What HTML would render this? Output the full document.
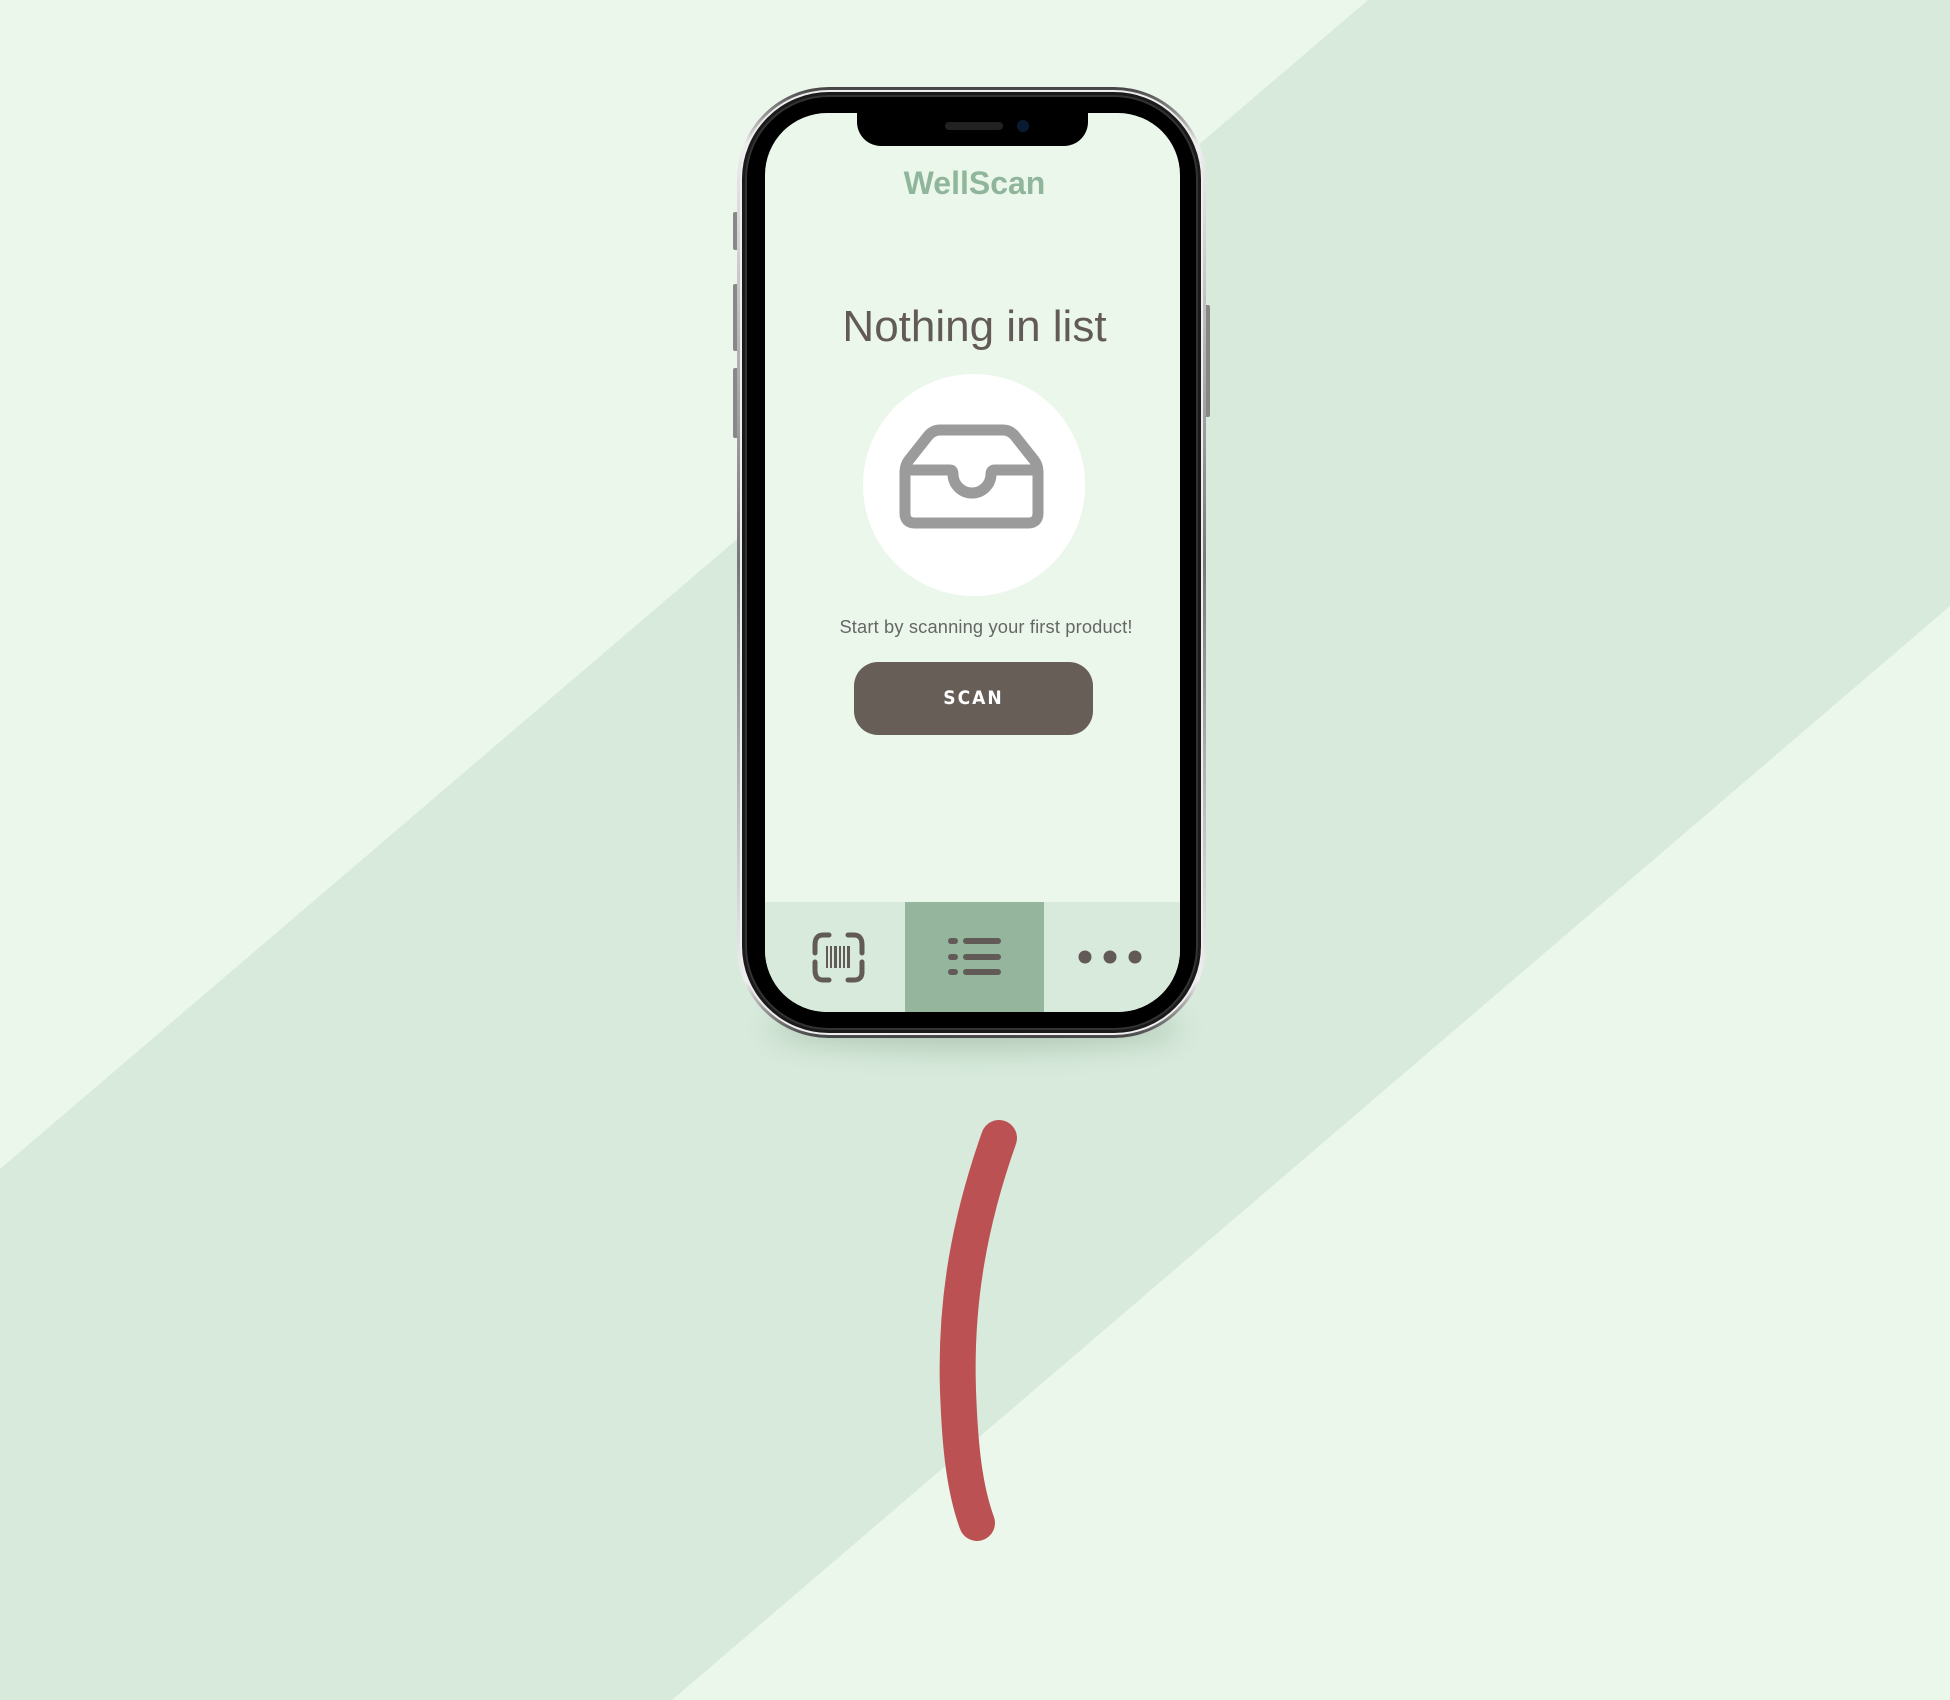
<!DOCTYPE html>
<html><head><meta charset="utf-8"><style>
*{margin:0;padding:0;box-sizing:border-box}
body{width:1950px;height:1700px;overflow:hidden;background:#ecf7ec;position:relative;font-family:"Liberation Sans",sans-serif}
.abs{position:absolute}
</style></head><body>
<svg class="abs" style="left:0;top:0" width="1950" height="1700">
<polygon points="1368,0 1950,0 1950,606 672,1700 0,1700 0,1169" fill="#d7eadb"/>
<path d="M999,1138 C970,1220 955,1300 958,1390 C960,1450 965,1490 977,1523" stroke="#bb5152" stroke-width="36" fill="none" stroke-linecap="round"/>
</svg>
<div class="abs" style="left:770px;top:990px;width:410px;height:40px;border-radius:50%;box-shadow:0 18px 28px rgba(90,120,95,0.3)"></div>
<div class="abs" style="left:733px;top:212px;width:6px;height:38px;background:#888;border-radius:2px"></div>
<div class="abs" style="left:733px;top:284px;width:6px;height:67px;background:#888;border-radius:2px"></div>
<div class="abs" style="left:733px;top:368px;width:6px;height:70px;background:#888;border-radius:2px"></div>
<div class="abs" style="left:1204px;top:305px;width:6px;height:112px;background:#888;border-radius:2px"></div>
<div class="abs" style="left:737px;top:87px;width:469px;height:951px;border-radius:92px;background:linear-gradient(180deg,#444,#eee 6%,#777 50%,#eee 94%,#444);padding:3px">
 <div style="width:100%;height:100%;border-radius:89px;background:#eee;padding:2px">
  <div style="width:100%;height:100%;border-radius:87px;background:#1a1a1a;padding:3px">
   <div style="width:100%;height:100%;border-radius:84px;background:#000;border:2px solid #333"></div>
  </div>
 </div>
</div>
<div class="abs" style="left:765px;top:113px;width:415px;height:899px;border-radius:62px;background:#ecf7ec;overflow:hidden">
 <div class="abs" style="left:92px;top:0;width:231px;height:33px;background:#000;border-radius:0 0 24px 24px"></div>
 <div class="abs" style="left:180px;top:9px;width:58px;height:8px;background:#222;border-radius:4px"></div>
 <div class="abs" style="left:252px;top:7px;width:12px;height:12px;background:#0b1a33;border-radius:50%"></div>
 <div class="abs" style="left:2px;top:52px;width:415px;text-align:center;font-size:32px;font-weight:bold;color:#8fb59a">WellScan</div>
 <div class="abs" style="left:2px;top:189px;width:415px;text-align:center;font-size:44px;color:#625a56">Nothing in list</div>
 <div class="abs" style="left:98px;top:261px;width:222px;height:222px;border-radius:50%;background:#fff"></div>
 <div class="abs" style="left:8px;top:503px;width:426px;text-align:center;font-size:18.3px;letter-spacing:0.15px;color:#666">Start by scanning your first product!</div>
 <div class="abs" style="left:89px;top:549px;width:239px;height:73px;border-radius:24px;background:#675e58;color:#fff;font-weight:bold;font-size:19px;letter-spacing:2px;text-align:center;line-height:73px;font-family:'DejaVu Sans Condensed','DejaVu Sans',sans-serif">SCAN</div>
 <div class="abs" style="left:0;top:789px;width:415px;height:110px;background:#d7eadb"></div>
 <div class="abs" style="left:140px;top:789px;width:139px;height:110px;background:#95b59c"></div>
</div>
<svg class="abs" style="left:0;top:0" width="1950" height="1700">
<path d="M940,430 L1003,430 Q1010,430 1015,436 L1034,460 Q1038,465 1038,472 L1038,513 Q1038,523 1028,523 L915,523 Q905,523 905,513 L905,472 Q905,465 909,460 L928,436 Q933,430 940,430 Z M905,470 L950,470 Q953,470 953,474 A19,19 0 0 0 991,474 Q991,470 995,470 L1038,470" stroke="#9b9b9b" stroke-width="11" fill="none" stroke-linejoin="round"/>
<g stroke="#625a56" stroke-width="5" fill="none" stroke-linecap="round">
<path d="M815,962 L815,970 Q815,980 823,980 L829,980 M862,962 L862,972 Q862,980 854,980 L848,980 M815,953 L815,945 Q815,935 823,935 L829,935 M862,953 L862,945 Q862,935 854,935 L848,935"/>
</g>
<g fill="#625a56">
<rect x="826" y="946" width="2" height="22"/><rect x="830" y="946" width="2" height="22"/><rect x="834" y="946" width="3" height="22"/><rect x="839" y="946" width="2" height="22"/><rect x="843" y="946" width="2" height="22"/><rect x="847" y="946" width="3" height="22"/>
</g>
<g stroke="#625a56" stroke-width="6" stroke-linecap="round">
<line x1="951" y1="941" x2="955" y2="941"/><line x1="966" y1="941" x2="998" y2="941"/>
<line x1="951" y1="957" x2="955" y2="957"/><line x1="966" y1="957" x2="998" y2="957"/>
<line x1="951" y1="972" x2="955" y2="972"/><line x1="966" y1="972" x2="998" y2="972"/>
</g>
<g fill="#625a56"><circle cx="1085" cy="957" r="6.5"/><circle cx="1110" cy="957" r="6.5"/><circle cx="1135" cy="957" r="6.5"/></g>
</svg>
</body></html>
